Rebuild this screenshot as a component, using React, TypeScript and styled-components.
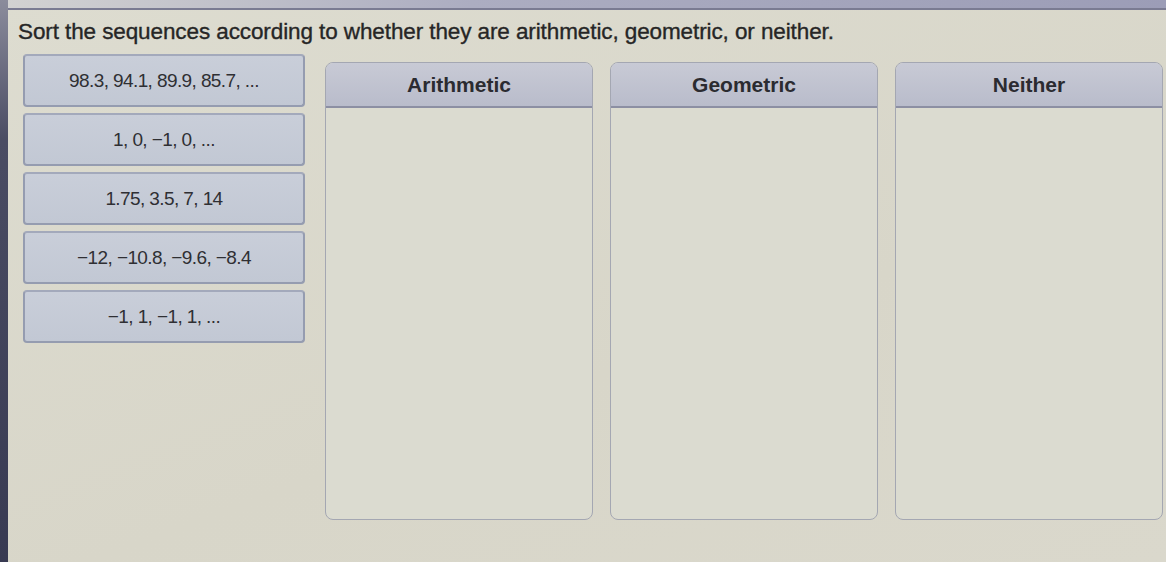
import styled, { createGlobalStyle } from 'styled-components'

const GlobalStyle = createGlobalStyle`
  html, body {
    margin: 0;
    padding: 0;
    background: #d8d7cb;
  }
  body {
    font-family: "Liberation Sans", Arial, sans-serif;
  }
`

const Screen = styled.div`
  width: 1166px;
  height: 562px;
  display: flex;
  overflow: hidden;
  background: #d9d8cc;
`

const Bezel = styled.div`
  width: 8px;
  flex-shrink: 0;
  background: linear-gradient(180deg, #8b8c9c 0%, #4a4c63 25%, #383a52 100%);
`

const Main = styled.div`
  flex: 1;
  display: flex;
  flex-direction: column;
  background: linear-gradient(160deg, #dddcd0 0%, #d8d6c9 60%, #dad8cc 100%);
`

const TopBar = styled.div`
  height: 8px;
  background: linear-gradient(90deg, #d2d2d2 0%, #acadc1 40%, #9c9db7 100%);
  border-bottom: 2px solid #7a7b92;
`

const Content = styled.div`
  padding: 8px 0 0 10px;
  display: flex;
  flex-direction: column;
`

const Title = styled.h1`
  margin: 0 0 8px 0;
  font-size: 22.5px;
  line-height: 28px;
  font-weight: 400;
  color: #262626;
  letter-spacing: -0.1px;
  -webkit-text-stroke: 0.35px #262626;
`

const Board = styled.div`
  display: flex;
  align-items: flex-start;
  gap: 20px;
`

const CardColumn = styled.div`
  width: 282px;
  padding-left: 5px;
  display: flex;
  flex-direction: column;
  gap: 6px;
`

const Card = styled.div`
  height: 49px;
  display: flex;
  align-items: center;
  justify-content: center;
  background: linear-gradient(180deg, #c9ced9 0%, #c2c8d4 100%);
  border: 2px solid #959cb0;
  border-top-color: #a3a9bb;
  border-radius: 4px;
  font-size: 19px;
  color: #2f2f33;
  letter-spacing: -0.6px;
`

const Bins = styled.div`
  display: flex;
  gap: 17px;
  margin-top: 8px;
`

const Bin = styled.div`
  width: 266px;
  height: 456px;
  display: flex;
  flex-direction: column;
  border: 1px solid #a4a7b2;
  border-radius: 8px;
  overflow: hidden;
  background: #dbdbd0;
`

const BinHeader = styled.div`
  height: 43px;
  flex-shrink: 0;
  display: flex;
  align-items: center;
  justify-content: center;
  background: linear-gradient(180deg, #c8cad5 0%, #b9bccb 100%);
  border-bottom: 2px solid #8c8fa3;
  font-size: 21px;
  font-weight: 700;
  color: #2b2b30;
`

const BinBody = styled.div`
  flex: 1;
`

const sequences = [
  '98.3, 94.1, 89.9, 85.7, ...',
  '1, 0, −1, 0, ...',
  '1.75, 3.5, 7, 14',
  '−12, −10.8, −9.6, −8.4',
  '−1, 1, −1, 1, ...',
]

const categories = ['Arithmetic', 'Geometric', 'Neither']

export default function App() {
  return (
    <>
      <GlobalStyle />
      <Screen>
        <Bezel />
        <Main>
          <TopBar />
          <Content>
            <Title>Sort the sequences according to whether they are arithmetic, geometric, or neither.</Title>
            <Board>
              <CardColumn>
                {sequences.map((s) => (
                  <Card key={s}>{s}</Card>
                ))}
              </CardColumn>
              <Bins>
                {categories.map((c) => (
                  <Bin key={c}>
                    <BinHeader>{c}</BinHeader>
                    <BinBody />
                  </Bin>
                ))}
              </Bins>
            </Board>
          </Content>
        </Main>
      </Screen>
    </>
  )
}
